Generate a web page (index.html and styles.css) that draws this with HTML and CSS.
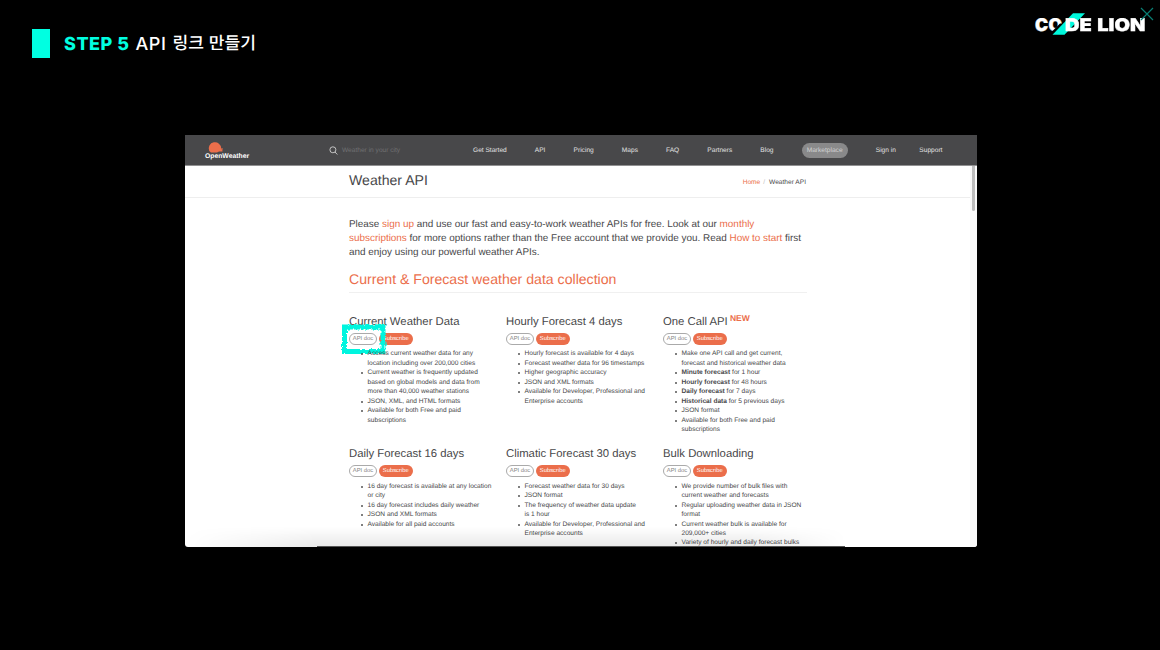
FILE: index.html
```html
<!DOCTYPE html>
<html lang="ko">
<head>
<meta charset="utf-8">
<title>API 링크 만들기</title>
<link rel="stylesheet" href="styles.css">
</head>
<body>
<div class="slide">
  <header class="top">
    <div class="title"><i class="block"></i><b class="step">STEP 5</b><span class="latin">API</span><span class="korean">링크 만들기</span></div>
    <div class="brand">
      <span class="co">CO</span>
      <svg class="slash" width="36" height="24" viewBox="0 0 36 24"><path d="M0 20.500 9 11.500H14L3 22.500Z" fill="#000"/><path d="M1.500 22.700 22 1.300H34L13.500 22.700Z" fill="#00f8dc"/></svg>
      <span class="de">DE LION</span>
    </div>
    <svg class="close" width="14" height="14" viewBox="0 0 14 14"><path d="M1 1 13 13M13 1 1 13" stroke="#087e73" stroke-width="1.2"/></svg>
  </header>
  <main class="browser">
    <nav class="nav">
      <div class="ow"><svg width="18" height="14" viewBox="0 0 18 14"><path d="M3.200 11A6.300 6.300 0 1 1 15.300 8.500H17V9.500H15.500L16.500 10.500V11.500H13L11 12.500H5Z" fill="#eb6e4b"/></svg><span>OpenWeather</span></div>
      <div class="search"><svg width="9" height="9" viewBox="0 0 9 9" fill="none" stroke="#d0d0d0" stroke-width=".9"><circle cx="3.900" cy="3.800" r="3"/><path d="M6 6 8.300 8.500"/></svg><span>Weather in your city</span></div>
      <div class="links"><span>Get Started</span><span>API</span><span>Pricing</span><span>Maps</span><span>FAQ</span><span>Partners</span><span>Blog</span><span class="market">Marketplace</span><span>Sign in</span><span class="support">Support</span></div>
    </nav>
    <div class="crumbs"><h1>Weather API</h1><div class="trail"><a>Home</a><i>/</i><span>Weather API</span></div></div>
    <div class="content">
      <p class="intro">Please <a>sign up</a> and use our fast and easy-to-work weather APIs for free. Look at our <a>monthly</a><br><a>subscriptions</a> for more options rather than the Free account that we provide you. Read <a>How to start</a> first<br>and enjoy using our powerful weather APIs.</p>
      <h2>Current &amp; Forecast weather data collection</h2>
      <div class="grid">
        <section class="card"><h3>Current Weather Data</h3><div class="buttons"><span class="doc">API doc</span><span class="sub">Subscribe</span>
          <svg class="marker" width="52" height="38" viewBox="0 0 52 38"><defs><filter id="rough" x="-10%" y="-10%" width="120%" height="120%"><feTurbulence type="fractalNoise" baseFrequency=".4" numOctaves="2" seed="4"/><feDisplacementMap in="SourceGraphic" scale="5" xChannelSelector="R" yChannelSelector="G"/></filter></defs><path d="M6.500 6H45V30.500H6.500Z" fill="none" stroke="#05f5df" stroke-width="5" filter="url(#rough)"/></svg></div>
          <ul><li>Access current weather data for any<br>location including over 200,000 cities</li><li>Current weather is frequently updated<br>based on global models and data from<br>more than 40,000 weather stations</li><li>JSON, XML, and HTML formats</li><li>Available for both Free and paid<br>subscriptions</li></ul></section>
        <section class="card"><h3>Hourly Forecast 4 days</h3><div class="buttons"><span class="doc">API doc</span><span class="sub">Subscribe</span></div>
          <ul><li>Hourly forecast is available for 4 days</li><li>Forecast weather data for 96 timestamps</li><li>Higher geographic accuracy</li><li>JSON and XML formats</li><li>Available for Developer, Professional and<br>Enterprise accounts</li></ul></section>
        <section class="card"><h3>One Call API <sup>NEW</sup></h3><div class="buttons"><span class="doc">API doc</span><span class="sub">Subscribe</span></div>
          <ul><li>Make one API call and get current,<br>forecast and historical weather data</li><li><b>Minute forecast</b> for 1 hour</li><li><b>Hourly forecast</b> for 48 hours</li><li><b>Daily forecast</b> for 7 days</li><li><b>Historical data</b> for 5 previous days</li><li>JSON format</li><li>Available for both Free and paid<br>subscriptions</li></ul></section>
        <section class="card"><h3>Daily Forecast 16 days</h3><div class="buttons"><span class="doc">API doc</span><span class="sub">Subscribe</span></div>
          <ul><li>16 day forecast is available at any location<br>or city</li><li>16 day forecast includes daily weather</li><li>JSON and XML formats</li><li>Available for all paid accounts</li></ul></section>
        <section class="card"><h3>Climatic Forecast 30 days</h3><div class="buttons"><span class="doc">API doc</span><span class="sub">Subscribe</span></div>
          <ul><li>Forecast weather data for 30 days</li><li>JSON format</li><li>The frequency of weather data update<br>is 1 hour</li><li>Available for Developer, Professional and<br>Enterprise accounts</li></ul></section>
        <section class="card"><h3>Bulk Downloading</h3><div class="buttons"><span class="doc">API doc</span><span class="sub">Subscribe</span></div>
          <ul><li>We provide number of bulk files with<br>current weather and forecasts</li><li>Regular uploading weather data in JSON<br>format</li><li>Current weather bulk is available for<br>209,000+ cities</li><li>Variety of hourly and daily forecast bulks</li></ul></section>
      </div>
    </div>
    <div class="track"><i class="thumb"></i></div>
    <div class="fade"></div>
    <div class="edge"></div>
  </main>
</div>
</body>
</html>
```
FILE: styles.css
```css
* { box-sizing: border-box; }
body { margin: 0; background: #000; font-family: "Liberation Sans", Arial, sans-serif; text-rendering: geometricPrecision; }
h1, h2, h3, p, ul { margin: 0; padding: 0; font-weight: 400; }
i { font-style: normal; }
.slide { position: relative; width: 1160px; height: 650px; overflow: hidden; background: #000; }
.top { display: flex; justify-content: space-between; height: 135px; padding: 29px 15px 0 32px; color: #fff; }
.title { display: flex; align-items: center; height: 29px; white-space: nowrap; }
.block { width: 18px; height: 29px; margin-right: 14px; background: #00ffe1; }
.step { width: 71.500px; font: 800 18px/31px Inter, sans-serif; color: #00ffe1; letter-spacing: .5px; padding-top: 1px; }
.latin { width: 37px; font: 500 18px/31px Inter, sans-serif; letter-spacing: .6px; padding-top: 1px; }
.korean { font: 500 17.100px/26px "Noto Sans CJK KR", sans-serif; height: 29px; }
.brand { position: relative; display: flex; width: 110px; height: 24px; margin-top: -17px; font: 900 17.500px/27px Inter, sans-serif; white-space: nowrap; -webkit-text-stroke: .4px #fff; }
.co { width: 29.500px; letter-spacing: .3px; }
.slash { position: absolute; left: 16px; top: 0; }
.de { position: relative; transform: scaleX(1.14); transform-origin: 0 0; word-spacing: 1.500px; }
.close { position: absolute; left: 1139.500px; top: 7px; }

.browser { position: relative; width: 792px; height: 412px; margin-left: 185px; overflow: hidden; background: #fff; border-radius: 0 0 3px 3px; color: #48484a; }
.nav { display: flex; align-items: center; height: 31px; padding-left: 20px; background: #48484a; border-bottom: 1px solid #919192; color: #e2e2e2; font-size: 6.600px; line-height: 9px; white-space: nowrap; }
.ow { display: flex; flex-direction: column; width: 124px; height: 26px; padding-top: 3px; font-size: 6.800px; font-weight: 700; line-height: 8px; color: #fff; }
.ow svg { margin: 0 0 -1px 1px; flex: none; height: 14px; }
.ow span { position: relative; }
.search { display: flex; align-items: center; gap: 4px; width: 144px; color: #707072; }
.links { display: flex; align-items: center; gap: 28.100px; }
.market { width: 46px; height: 15px; border-radius: 8px; background: #89898a; color: #d2d2d2; text-align: center; line-height: 15px; }
.support { margin-left: -4.700px; }
.crumbs { display: flex; justify-content: space-between; height: 32px; padding: 0 171px 0 164px; border-bottom: 1px solid #eee; }
h1 { font-size: 14.100px; line-height: 29px; }
.trail { display: flex; gap: 3px; font-size: 6.600px; line-height: 33px; }
.trail i { color: #bbb; margin-right: 1px; }
a { color: #eb6e4b; }
.content { width: 622px; padding: 20px 0 0 164px; }
.intro { font-size: 9.910px; line-height: 13.800px; white-space: nowrap; }
h2 { height: 21px; margin-top: 12.700px; border-bottom: 1px solid #f0f0f0; font-size: 14.120px; line-height: 14px; color: #eb6e4b; white-space: nowrap; }
.grid { display: grid; grid-template-columns: repeat(3, 157px); grid-auto-rows: 132.400px; margin-top: 22px; white-space: nowrap; }
h3 { font-size: 11.320px; line-height: 15px; height: 17.600px; }
sup { font-size: 8.500px; line-height: 0; color: #eb6e4b; font-weight: 700; vertical-align: 4px; margin-left: -1px; }
.buttons { position: relative; display: flex; gap: 2px; height: 12px; font-size: 5.800px; line-height: 11px; text-align: center; }
.doc { width: 28px; border: 1px solid #aaa; border-radius: 6px; line-height: 10px; color: #848484; }
.sub { width: 33.500px; border-radius: 6px; line-height: 12px; background: #eb6e4b; color: #fff; }
.marker { position: absolute; left: -11px; top: -12px; }
ul { padding-left: 18.500px; margin-top: 4.700px; list-style: none; font-size: 6.600px; line-height: 9.450px; }
li { position: relative; }
li::before { content: ""; position: absolute; left: -6.500px; top: 4px; width: 2px; height: 2px; border-radius: 50%; background: #555; }
.track { position: absolute; right: 0; top: 31px; bottom: 0; width: 7px; background: #fafafa; }
.thumb { display: block; width: 3.500px; height: 45px; margin-left: 1.500px; border-radius: 0 0 2px 2px; background: #bebebe; }
.fade { position: absolute; left: 0; right: 130px; bottom: 0; height: 20px; background: linear-gradient(rgba(0,0,0,0), rgba(0,0,0,.09)); mask-image: linear-gradient(90deg, transparent, #000 20%, #000 85%, transparent); }
.edge { position: absolute; left: 132px; bottom: 0; width: 528px; height: 1px; background: #555; }
```
